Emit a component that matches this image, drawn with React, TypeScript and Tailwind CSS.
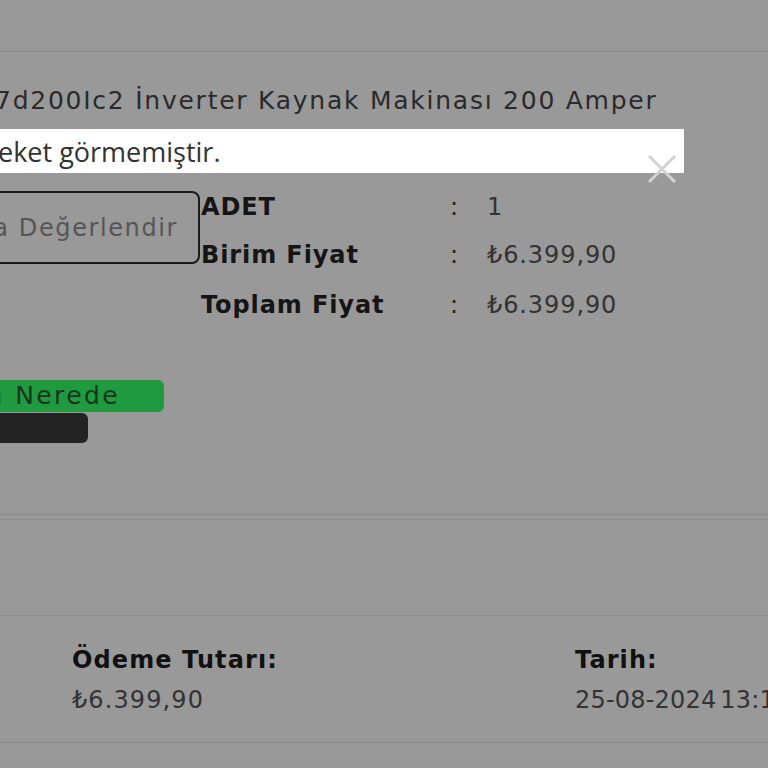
export default function App() {
  const m = "font-['DejaVu_Sans',sans-serif]";
  return (
    <div className={`relative w-[768px] h-[768px] overflow-hidden bg-[#999999] ${m}`}>
      <div className="h-[52px] border-b border-[#8d8d8d]" />
      <div className="pt-[33px] ml-[-5px] text-[25px] leading-[32px] tracking-[1.75px] text-[#2a2a2a] whitespace-nowrap">
        7d200Ic2 İnverter Kaynak Makinası 200 Amper
      </div>
      <div className="mt-[74px] flex">
        <div className="w-[200px] shrink-0 flex flex-col">
          <div className="ml-[-30px] h-[73px] border-2 border-[#1a1a1a] rounded-[8px] flex items-center justify-end pr-[20px] text-[24px] tracking-[1.6px] text-[#555] whitespace-nowrap">
            a Değerlendir
          </div>
          <div className="mt-[116px] w-[200px] ml-[-36px] h-[32px] bg-[#1f9a3f] rounded-r-[6px] flex items-center justify-end pr-[44px] text-[25px] tracking-[2.4px] text-[#17361d] whitespace-nowrap">
            n Nerede
          </div>
          <div className="ml-[-36px] w-[124px] h-[30px] mt-[1px] bg-[#232323] rounded-[6px]" />
        </div>
        <div className="ml-[1px] flex flex-col text-[24px] leading-[32px] tracking-[0.9px] whitespace-nowrap">
          <div className="flex h-[32px]">
            <span className="w-[249px] shrink-0 font-semibold text-[#151515]">ADET</span>
            <span className="w-[37px] shrink-0 text-[#222]">:</span>
            <span className="text-[#333]">1</span>
          </div>
          <div className="flex h-[32px] mt-[16px]">
            <span className="w-[249px] shrink-0 font-semibold text-[#151515]">Birim Fiyat</span>
            <span className="w-[37px] shrink-0 text-[#222]">:</span>
            <span className="text-[#333]">₺6.399,90</span>
          </div>
          <div className="flex h-[32px] mt-[18px]">
            <span className="w-[249px] shrink-0 font-semibold text-[#151515]">Toplam Fiyat</span>
            <span className="w-[37px] shrink-0 text-[#222]">:</span>
            <span className="text-[#333]">₺6.399,90</span>
          </div>
        </div>
      </div>
      <div className="mt-[71px] h-[6px] border-t border-b border-[#8d8d8d]" />
      <div className="h-[96px] border-b border-[#8d8d8d]" />
      <div className="flex pt-[28px] h-[127px] border-b border-[#8d8d8d] text-[24px] leading-[32px] tracking-[1.1px]">
        <div className="ml-[72px] w-[503px] shrink-0 flex flex-col">
          <span className="font-bold text-[#111]">Ödeme Tutarı:</span>
          <span className="mt-[8px] text-[#333]">₺6.399,90</span>
        </div>
        <div className="flex flex-col whitespace-nowrap">
          <span className="font-bold text-[#111]">Tarih:</span>
          <span className="mt-[8px] text-[#333] tracking-[0.2px] [word-spacing:-4px]">25-08-2024 13:17</span>
        </div>
      </div>
      <div className="absolute left-0 top-[129px] w-[684px] h-[44px] bg-white flex items-center pt-[2px] font-['Open_Sans',sans-serif] text-[27px] text-[#333] whitespace-nowrap">
        <span className="ml-[-2px]">eket görmemiştir.</span>
      </div>
      <div className="absolute left-[647px] top-[154px] w-[30px] h-[30px] text-[#d2d2d2]">
        <svg viewBox="0 0 30 30" width="30" height="30" fill="none" stroke="currentColor" strokeWidth="3" strokeLinecap="square">
          <path d="M3 3 L27 27 M27 3 L3 27" />
        </svg>
      </div>
    </div>
  );
}
